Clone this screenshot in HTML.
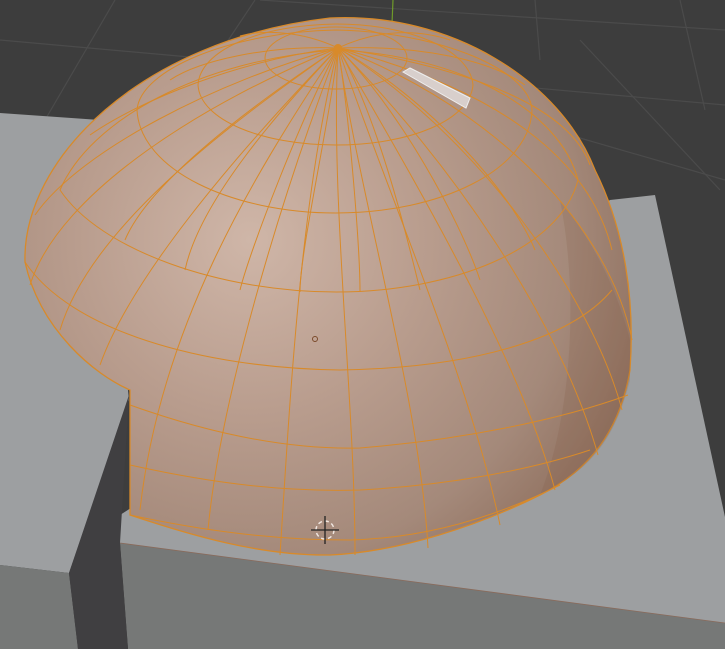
<!DOCTYPE html>
<html><head><style>html,body{margin:0;padding:0;background:#3d3d3d;overflow:hidden}svg{display:block}</style></head>
<body>
<svg width="725" height="649" viewBox="0 0 725 649" xmlns="http://www.w3.org/2000/svg">
<defs>
<radialGradient id="dg" cx="250" cy="240" r="430" gradientUnits="userSpaceOnUse">
<stop offset="0" stop-color="#cfb6a8"/><stop offset="0.4" stop-color="#b99d8e"/><stop offset="0.75" stop-color="#a4897a"/><stop offset="1" stop-color="#8c6c5a"/>
</radialGradient>
</defs>
<rect width="725" height="649" fill="#3d3d3d"/>
<g stroke="#4b4b4b" stroke-width="1.2" fill="none">
<line x1="0" y1="40" x2="725" y2="105"/>
<line x1="260" y1="0" x2="725" y2="30"/>
<line x1="380" y1="80" x2="725" y2="180"/>
<line x1="115" y1="0" x2="45" y2="120"/>
<line x1="255" y1="0" x2="215" y2="60"/>
<line x1="535" y1="0" x2="540" y2="60"/>
<line x1="680" y1="0" x2="705" y2="110"/>
<line x1="580" y1="40" x2="720" y2="190"/>
</g>
<line x1="393" y1="0" x2="392" y2="24" stroke="#6f9a2a" stroke-width="1.2"/>
<polygon points="610,200 655,195 725,517 725,625 120,543 120,515" fill="#9d9fa1"/>
<polygon points="120,543 725,623 725,649 128,649" fill="#767877"/>
<line x1="120" y1="543" x2="725" y2="623" stroke="#8a6a5a" stroke-width="0.8"/>
<polygon points="0,113 100,120 129,400 69,573 0,565" fill="#9d9fa1"/>
<polygon points="0,565 69,573 78,649 0,649" fill="#767877"/>
<polygon points="129,395 120,543 128,649 78,649 69,573" fill="#403f41"/>
<path d="M25,262 C22,160 140,40 330,18 C450,12 560,80 595,170 C625,230 635,300 630,370 C620,430 590,470 540,495 C480,525 400,552 330,555 C260,556 190,535 130,515 L130,390 C95,375 40,330 25,262 Z" fill="url(#dg)" stroke="#d88a2a" stroke-width="1.3"/>
<path d="M560,200 C600,250 620,300 630,340 L630,380 C615,440 590,470 540,495 C570,420 580,300 560,200Z" fill="#7d5a45" opacity="0.18"/>
<g fill="none" stroke="#d88a2a" stroke-width="1">
<ellipse cx="336" cy="58" rx="71" ry="31"/>
<path d="M198,85 C200,50 260,25 336,24 C410,24 470,50 473,85 C470,120 410,145 336,145 C262,145 200,120 198,85Z"/>
<path d="M137,110 C140,70 230,32 336,30 C440,32 530,70 532,110 C530,170 440,213 336,213 C232,213 140,170 137,110Z"/>
<path d="M60,190 C90,120 200,60 336,50 C460,55 560,110 578,180 C560,250 450,292 336,292 C220,292 100,250 60,190Z"/>
<path d="M25,262 C70,330 200,368 340,370 C470,368 570,340 612,290"/>
<path d="M130,405 C200,430 280,450 360,448 C460,440 560,420 628,395"/>
<path d="M130,465 C220,485 290,492 360,490 C450,485 530,470 590,450"/>
<path d="M130,515 C200,530 270,540 350,540 C430,538 500,515 560,485"/>
<path d="M338,48 C300,200 290,400 280,555"/>
<path d="M338,48 C330,200 355,400 355,555"/>
<path d="M338,48 C360,200 420,400 428,548"/>
<path d="M338,48 C390,200 470,380 500,525"/>
<path d="M338,48 C420,190 520,360 555,490"/>
<path d="M338,48 C450,160 560,320 598,455"/>
<path d="M338,48 C470,130 590,290 622,410"/>
<path d="M338,48 C500,110 610,230 632,340"/>
<path d="M338,48 C500,90 590,160 612,250"/>
<path d="M338,48 C480,70 570,110 590,165"/>
<path d="M338,48 C280,200 220,400 208,530"/>
<path d="M338,48 C250,180 160,330 140,510"/>
<path d="M338,48 C230,160 130,280 100,365"/>
<path d="M338,48 C220,130 90,230 60,330"/>
<path d="M338,48 C210,100 60,190 30,285"/>
<path d="M338,48 C220,80 80,150 35,215"/>
<path d="M338,48 C240,60 140,100 90,135"/>
<path d="M338,48 C270,45 200,60 170,80"/>
<path d="M338,48 C300,30 260,30 240,36"/>
<path d="M338,48 C380,28 420,30 450,40"/>
<path d="M338,48 C420,45 490,60 525,85"/>
<path d="M338,48 C300,120 250,250 240,290"/>
<path d="M338,48 C330,120 300,250 300,292"/>
<path d="M338,48 C350,120 360,250 360,292"/>
<path d="M338,48 C380,120 410,250 420,290"/>
<path d="M338,48 C400,110 460,220 480,280"/>
<path d="M338,48 C430,100 510,190 535,250"/>
<path d="M338,48 C280,110 200,200 185,270"/>
<path d="M338,48 C260,100 150,180 125,240"/>
</g>
<polygon points="403,72 410,68 470,98 466,108" fill="#d8cfcc" stroke="#eee" stroke-width="1"/>
<circle cx="338" cy="48" r="4" fill="#d88a2a"/>
<circle cx="315" cy="339" r="2.5" fill="none" stroke="#7a4a2a" stroke-width="1"/>
<g>
<circle cx="325" cy="530" r="9" fill="none" stroke="#f0e6e0" stroke-width="1.5" stroke-dasharray="4 3"/>
<line x1="325" y1="516" x2="325" y2="544" stroke="#222" stroke-width="1.3"/>
<line x1="311" y1="530" x2="339" y2="530" stroke="#222" stroke-width="1.3"/>
</g>
</svg>
</body></html>
